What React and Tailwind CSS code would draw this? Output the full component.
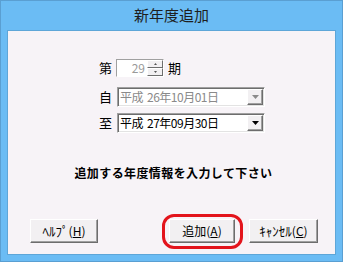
import React from "react";

const font = { fontFamily: '"Noto Sans CJK JP", "Noto Sans", sans-serif' };

function Btn({ children, w, className = "" }) {
  return (
    <div
      className={`relative h-[24px] ${w} flex items-center justify-center bg-[#f2f0f2] border border-t-white border-l-white border-b-[#6d6d6d] border-r-[#6d6d6d] shadow-[inset_-1px_-1px_0_#a0a0a0] text-[12px] text-black ${className}`}
    >
      {children}
    </div>
  );
}

function DownBtn({ disabled }) {
  return (
    <div className="w-[16px] h-[16px] flex items-center justify-center bg-[#f2f0f2] border border-t-white border-l-white border-b-[#6d6d6d] border-r-[#6d6d6d] shadow-[inset_-1px_-1px_0_#a0a0a0]">
      <svg width="7" height="4" viewBox="0 0 7 4">
        <path d="M0 0H7L3.5 4Z" fill={disabled ? "#8a8a8a" : "#000"} />
      </svg>
    </div>
  );
}

function Combo({ era, date, disabled }) {
  return (
    <div className="w-[148px] h-[20px] flex items-center bg-white border border-t-[#a0a0a0] border-l-[#a0a0a0] border-b-white border-r-white shadow-[inset_1px_1px_0_#6d6d6d,inset_-1px_-1px_0_#e3e3e3]">
      <span
        className={`flex-1 pl-[2px] text-[12px] leading-[16px] tracking-[-0.5px] ${disabled ? "text-[#8a8a8a]" : "text-black"}`}
      >
        {era}
        <span className="ml-[4px]">{date}</span>
      </span>
      <div className="mr-[1px]">
        <DownBtn disabled={disabled} />
      </div>
    </div>
  );
}

export default function App() {
  return (
    <div
      style={font}
      className="w-[343px] h-[262px] bg-[#6bbcf4] border border-[#5a9fd2] flex flex-col"
    >
      <div className="h-[29px] flex items-center justify-center text-[15px] text-[#1e1e1e]">
        新年度追加
      </div>
      <div className="mx-[6px] h-[225px] bg-[#f7f3f7] border border-[#5ea6d8] flex flex-col">
        <div className="ml-[91px] mt-[28px] flex flex-col">
          <div className="flex items-center h-[18px]">
            <span className="w-[17px] text-[13px] leading-[16px]">第</span>
            <div className="w-[48px] h-[18px] flex items-center bg-white border border-t-[#a0a0a0] border-l-[#a0a0a0] border-b-white border-r-white">
              <span className="flex-1 text-right pr-[2px] text-[12px] leading-[14px] text-[#9a9a9a]">
                29
              </span>
              <div className="flex flex-col w-[16px] h-[16px]">
                <div className="h-[8px] flex items-center justify-center bg-[#f2f0f2] border border-t-white border-l-white border-b-[#6d6d6d] border-r-[#6d6d6d]">
                  <svg width="3" height="2" viewBox="0 0 3 2">
                    <path d="M0 2H3L1.5 0Z" fill="#555" />
                  </svg>
                </div>
                <div className="h-[8px] flex items-center justify-center bg-[#f2f0f2] border border-t-white border-l-white border-b-[#6d6d6d] border-r-[#6d6d6d]">
                  <svg width="3" height="2" viewBox="0 0 3 2">
                    <path d="M0 0H3L1.5 2Z" fill="#555" />
                  </svg>
                </div>
              </div>
            </div>
            <span className="ml-[4px] text-[13px] leading-[16px]">期</span>
          </div>
          <div className="flex items-center mt-[10px]">
            <span className="w-[18px] text-[13px] leading-[16px]">自</span>
            <Combo era="平成" date="26年10月01日" disabled />
          </div>
          <div className="flex items-center mt-[6px]">
            <span className="w-[18px] text-[13px] leading-[16px]">至</span>
            <Combo era="平成" date="27年09月30日" />
          </div>
        </div>
        <div className="mt-[32px] text-center text-[12px] leading-[16px] font-bold text-black tracking-[0.4px] pl-[4px]">
          追加する年度情報を入力して下さい
        </div>
        <div className="mt-[38px] flex pl-[22px]">
          <Btn w="w-[68px]">
            <span className="text-[13px]">ﾍﾙﾌﾟ</span>(<span className="underline">H</span>)
          </Btn>
          <Btn w="w-[66px]" className="ml-[71px]">
            追加(<span className="underline">A</span>)
            <div className="absolute -left-[8px] -top-[6px] w-[81px] h-[35px] border-[3px] border-[#e3141c] rounded-[12px]" />
          </Btn>
          <Btn w="w-[69px]" className="ml-[14px]">
            <span className="text-[13px]">ｷｬﾝｾﾙ</span>(<span className="underline">C</span>)
          </Btn>
        </div>
      </div>
    </div>
  );
}
